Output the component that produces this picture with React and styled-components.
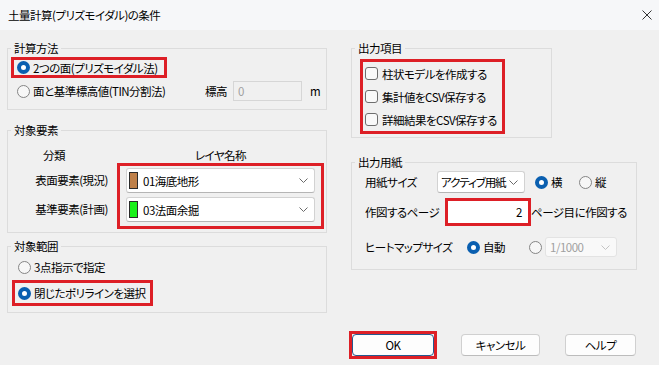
import React from "react";
import styled, { createGlobalStyle } from "styled-components";

const Global = createGlobalStyle`
  html, body {
    margin: 0;
    padding: 0;
  }
  body {
    background: #f0f0f0;
    font-family: "Noto Sans CJK JP", "Liberation Sans", sans-serif;
    font-size: 11.5px;
    letter-spacing: -0.5px;
    color: #000;
    font-feature-settings: "palt";
  }
`;

const Window = styled.div`
  width: 659px;
  height: 365px;
  background: #f0f0f0;
  overflow: hidden;
  display: flex;
  flex-direction: column;
`;

const TitleBar = styled.div`
  flex: none;
  height: 30px;
  display: flex;
  align-items: center;
  justify-content: space-between;
  padding: 0 7px 0 8px;
  background: #f6f7f9;
`;

const Main = styled.div`
  display: flex;
  align-items: flex-start;
  gap: 24px;
  padding: 11px 0 0 7px;
`;

const Column = styled.div`
  display: flex;
  flex-direction: column;
`;

const Group = styled.fieldset`
  box-sizing: border-box;
  width: ${(p) => p.$w}px;
  min-width: 0;
  margin: ${(p) => p.$mt || 0}px 0 0;
  padding: 0;
  border: 1px solid #dcdcdc;
`;

const Legend = styled.legend`
  margin-left: 3px;
  padding: 0 3px;
  line-height: 14px;
`;

const Body = styled.div`
  padding: ${(p) => p.$pad};
  display: flex;
  flex-direction: column;
  align-items: flex-start;
`;

const Mark = styled.div`
  box-sizing: border-box;
  flex: none;
  min-width: ${(p) => p.$w}px;
  width: fit-content;
  padding-right: ${(p) => p.$pr || 0}px;
  border: 3px solid ${(p) => (p.$on ? "#dd1f26" : "transparent")};
`;

const Row = styled.div`
  display: flex;
  align-items: center;
  height: ${(p) => p.$h}px;
  margin-top: ${(p) => p.$mt || 0}px;
  padding-left: ${(p) => p.$pl || 0}px;
  white-space: nowrap;
`;

const Label = styled.span`
  flex: none;
  width: ${(p) => (p.$w ? `${p.$w}px` : "auto")};
  margin-left: ${(p) => p.$ml || 0}px;
  white-space: nowrap;
`;

const Radio = styled.span`
  flex: none;
  box-sizing: border-box;
  width: 13px;
  height: 13px;
  border-radius: 50%;
  margin: 0 3px 0 ${(p) => p.$ml || 0}px;
  border: ${(p) => (p.$checked ? "4px solid #0a5fb0" : "1px solid #858585")};
  background: ${(p) => (p.$checked ? "#fff" : "#f7f7f7")};
`;

const Check = styled.span`
  flex: none;
  box-sizing: border-box;
  width: 13px;
  height: 13px;
  margin-right: 4px;
  border-radius: 3px;
  border: 1px solid #6e6e6e;
  background: #f9f9f9;
`;

const TextBox = styled.div`
  box-sizing: border-box;
  flex: none;
  display: flex;
  align-items: center;
  justify-content: ${(p) => (p.$right ? "flex-end" : "flex-start")};
  width: ${(p) => p.$w}px;
  height: ${(p) => p.$h}px;
  padding: 0 5px 0 4px;
  background: ${(p) => (p.$disabled ? "#f0f0f0" : "#fff")};
  border: 1px solid ${(p) => (p.$disabled ? "#d6d6d6" : "transparent")};
  color: ${(p) => (p.$disabled ? "#a0a0a0" : "#000")};
`;

const Combo = styled.div`
  box-sizing: border-box;
  flex: none;
  display: flex;
  align-items: center;
  width: ${(p) => (p.$w ? `${p.$w}px` : "100%")};
  height: ${(p) => p.$h}px;
  padding: 0 6px 0 ${(p) => p.$pl || 4}px;
  background: ${(p) => (p.$disabled ? "#f9f9f9" : "#fff")};
  border: 1px solid ${(p) => (p.$disabled ? "#e3e3e3" : "#d2d2d2")};
  border-bottom-color: ${(p) => (p.$disabled ? "#e3e3e3" : "#b5b5b5")};
  border-radius: 3px;
  color: ${(p) => (p.$disabled ? "#a0a0a0" : "#000")};
  white-space: nowrap;
`;

const ComboText = styled.span`
  flex: 1;
  min-width: 0;
  letter-spacing: ${(p) => (p.$tight ? "-1.1px" : "inherit")};
`;

const Swatch = styled.span`
  flex: none;
  box-sizing: border-box;
  width: 9px;
  height: 17px;
  margin-right: 5px;
  border: 1px solid #2b2b2b;
  background: ${(p) => p.$color};
`;

const HeadRow = styled.div`
  display: flex;
  height: 16px;
  line-height: 16px;
  margin-top: 10px;
`;

const HeadCell = styled.div`
  flex: none;
  width: ${(p) => p.$w}px;
  padding-left: ${(p) => p.$pl || 0}px;
  box-sizing: border-box;
  text-align: ${(p) => (p.$center ? "center" : "left")};
`;

const LayerBody = styled.div`
  display: flex;
  padding-bottom: 3px;
`;

const LayerLabels = styled.div`
  flex: none;
  box-sizing: border-box;
  width: 109px;
  padding: 5px 9px 0 0;
  display: flex;
  flex-direction: column;
  gap: 4px;
  text-align: right;
`;

const LayerLabel = styled.div`
  height: 25px;
  line-height: 25px;
  white-space: nowrap;
`;

const ComboStack = styled.div`
  display: flex;
  flex-direction: column;
  gap: 4px;
  padding: 2px 6px 4px;
`;

const CheckStack = styled.div`
  padding-left: 2px;
`;

const Footer = styled.div`
  display: flex;
  justify-content: flex-end;
  align-items: center;
  margin-top: 18px;
  padding-right: 23px;
`;

const Button = styled.div`
  box-sizing: border-box;
  flex: none;
  display: flex;
  align-items: center;
  justify-content: center;
  width: ${(p) => p.$w}px;
  height: 22px;
  margin-left: ${(p) => p.$ml || 0}px;
  background: #fdfdfd;
  border: 1px solid ${(p) => (p.$default ? "#24598f" : "#d0d0d0")};
  border-bottom-color: ${(p) => (p.$default ? "#24598f" : "#bcbcbc")};
  border-radius: 4px;
`;

const Chevron = ({ color = "#6a6a6a" }) => (
  <svg width="9" height="5" viewBox="0 0 9 5" style={{ flex: "none" }}>
    <polyline points="0.5,0.5 4.5,4.5 8.5,0.5" fill="none" stroke={color} strokeWidth="1" />
  </svg>
);

const CloseIcon = () => (
  <svg width="10" height="10" viewBox="0 0 10 10">
    <path d="M0.5 0.5L9.5 9.5M9.5 0.5L0.5 9.5" stroke="#333" strokeWidth="1" />
  </svg>
);

export default function App() {
  return (
    <Window>
      <Global />
      <TitleBar>
        <span>土量計算(プリズモイダル)の条件</span>
        <CloseIcon />
      </TitleBar>

      <Main>
        <Column>
          <Group $w={320}>
            <Legend>計算方法</Legend>
            <Body $pad="2px 0 5px 3px">
              <Mark $on $w={151} $pr={6}>
                <Row $h={15} $pl={3}>
                  <Radio $checked />
                  <Label>2つの面(プリズモイダル法)</Label>
                </Row>
              </Mark>
              <Mark $w={310}>
                <Row $h={20} $pl={3}>
                  <Radio />
                  <Label $w={172}>面と基準標高値(TIN分割法)</Label>
                  <Label $w={28}>標高</Label>
                  <TextBox $w={69} $h={20} $disabled>0</TextBox>
                  <Label $ml={8}>m</Label>
                </Row>
              </Mark>
            </Body>
          </Group>

          <Group $w={320} $mt={13}>
            <Legend>対象要素</Legend>
            <HeadRow>
              <HeadCell $w={109} $pl={35}>分類</HeadCell>
              <HeadCell $w={207} $center>レイヤ名称</HeadCell>
            </HeadRow>
            <LayerBody>
              <LayerLabels>
                <LayerLabel>表面要素(現況)</LayerLabel>
                <LayerLabel>基準要素(計画)</LayerLabel>
              </LayerLabels>
              <Mark $on $w={207}>
                <ComboStack>
                  <Combo $w={189} $h={25} $pl={2}>
                    <Swatch $color="#bf8049" />
                    <ComboText>01海底地形</ComboText>
                    <Chevron />
                  </Combo>
                  <Combo $w={189} $h={25} $pl={2}>
                    <Swatch $color="#19f019" />
                    <ComboText>03法面余掘</ComboText>
                    <Chevron />
                  </Combo>
                </ComboStack>
              </Mark>
            </LayerBody>
          </Group>

          <Group $w={320} $mt={6}>
            <Legend>対象範囲</Legend>
            <Body $pad="1px 0 6px 4px">
              <Mark $w={134}>
                <Row $h={20} $pl={3}>
                  <Radio />
                  <Label>3点指示で指定</Label>
                </Row>
              </Mark>
              <Mark $on $w={134} $pr={5}>
                <Row $h={20} $pl={3}>
                  <Radio $checked />
                  <Label>閉じたポリラインを選択</Label>
                </Row>
              </Mark>
            </Body>
          </Group>
        </Column>

        <Column>
          <Group $w={201}>
            <Legend>出力項目</Legend>
            <Body $pad="4px 0 3px 8px">
              <Mark $on $w={145} $pr={4}>
                <CheckStack>
                  <Row $h={23}>
                    <Check />
                    <Label>柱状モデルを作成する</Label>
                  </Row>
                  <Row $h={23}>
                    <Check />
                    <Label>集計値をCSV保存する</Label>
                  </Row>
                  <Row $h={23}>
                    <Check />
                    <Label>詳細結果をCSV保存する</Label>
                  </Row>
                </CheckStack>
              </Mark>
            </Body>
          </Group>

          <Group $w={286} $mt={17}>
            <Legend>出力用紙</Legend>
            <Body $pad="2px 0 11px 13px">
              <Row $h={22}>
                <Label $w={72}>用紙サイズ</Label>
                <Combo $w={88} $h={22} $pl={3}>
                  <ComboText $tight>アクティブ用紙</ComboText>
                  <Chevron />
                </Combo>
                <Radio $checked $ml={10} />
                <Label>横</Label>
                <Radio $ml={17} />
                <Label>縦</Label>
              </Row>
              <Row $h={28} $mt={5}>
                <Label $w={80}>作図するページ</Label>
                <Mark $on $w={86}>
                  <TextBox $w={80} $h={22} $right>2</TextBox>
                </Mark>
                <Label>ページ目に作図する</Label>
              </Row>
              <Row $h={22} $mt={10}>
                <Label $w={102}>ヒートマップサイズ</Label>
                <Radio $checked />
                <Label>自動</Label>
                <Radio $ml={24} />
                <Combo $w={72} $h={20} $pl={4} $disabled>
                  <ComboText>1/1000</ComboText>
                  <Chevron color="#c4c4c4" />
                </Combo>
              </Row>
            </Body>
          </Group>
        </Column>
      </Main>

      <Footer>
        <Mark $on $w={88}>
          <Button $w={82} $default>OK</Button>
        </Mark>
        <Button $w={79} $ml={24}>キャンセル</Button>
        <Button $w={71} $ml={25}>ヘルプ</Button>
      </Footer>
    </Window>
  );
}
